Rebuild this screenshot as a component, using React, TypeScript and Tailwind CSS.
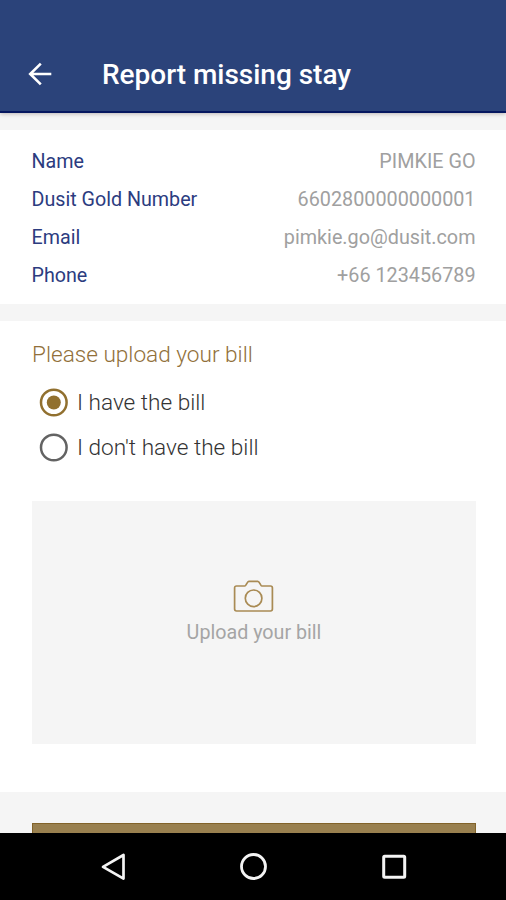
const details = [
  { label: "Name", value: "PIMKIE GO" },
  { label: "Dusit Gold Number", value: "6602800000000001" },
  { label: "Email", value: "pimkie.go@dusit.com" },
  { label: "Phone", value: "+66 123456789" },
];

function Header() {
  return (
    <header className="flex h-[113px] shrink-0 items-end border-b-2 border-[#05175f] bg-[#2b437a] pb-[18px] shadow-[0_1px_4px_rgba(60,40,40,0.3)]">
      <svg className="mb-[7px] ml-[28px] h-6 w-6" viewBox="0 0 24 24" fill="none" stroke="#fff" strokeWidth="2.6">
        <path d="M23.3 12H2.2M12.8 1.6L2.2 12l10.6 10.4" />
      </svg>
      <h1 className="ml-[50px] text-[28px] leading-[36px] font-medium tracking-[-0.02px] text-white">Report missing stay</h1>
    </header>
  );
}

function Details() {
  return (
    <section className="mt-[17px] h-[174px] bg-white pt-[13px] pr-[30.5px] pl-[31.5px]">
      {details.map((item) => (
        <div key={item.label} className="flex h-[38px] items-center justify-between text-[19.7px] leading-[38px]">
          <span className="text-[#2c3c7f]">{item.label}</span>
          <span className="text-[19.8px] text-[#a0a0a0]">{item.value}</span>
        </div>
      ))}
    </section>
  );
}

function Option({ label, checked }: { label: string; checked?: boolean }) {
  return (
    <div className="flex h-[45px] items-center gap-[9px] pl-2">
      <svg className="h-7 w-7 overflow-visible" viewBox="0 0 28 28" fill="none">
        <circle cx="13.8" cy="13.5" r="12.8" stroke={checked ? "#91702f" : "#636363"} strokeWidth="2.5" />
        {checked && <circle cx="13.8" cy="13.5" r="7" fill="#91702f" />}
      </svg>
      <span className="pt-[1px] text-[22.6px] font-light text-[#333]">{label}</span>
    </div>
  );
}

function Upload() {
  return (
    <section className="mt-[17px] h-[471px] bg-white px-8 pt-[19px]">
      <h2 className="text-[22.6px] leading-[30px] font-light text-[#91703a]">Please upload your bill</h2>
      <div className="mt-[10px]">
        <Option label="I have the bill" checked />
        <Option label="I don't have the bill" />
      </div>
      <div className="mt-[31px] flex h-[243px] w-[444px] flex-col items-center bg-[#f5f5f5] pt-[78px]">
        <svg className="h-[34px] w-[42px]" viewBox="0 0 42 34" fill="none" stroke="#a98b54" strokeWidth="1.7">
          <path d="M3.5 7h8.3c1.3 0 2.4-4.7 4-4.7h9c1.8 0 2.7 4.7 4 4.7h8.700c1.200 0 1.900.7 1.900 1.900v21.200c0 1.200-.7 1.900-1.900 1.900h-34c-1.200 0-1.900-.7-1.900-1.900V8.900c0-1.200.7-1.900 1.900-1.900z" />
          <circle cx="20.6" cy="19.3" r="8.3" />
        </svg>
        <p className="mt-[5px] text-[19.7px] leading-[30px] text-[#a5a5a5]">Upload your bill</p>
      </div>
    </section>
  );
}

function NavigationBar() {
  return (
    <nav className="flex h-[67px] items-center bg-black pl-[100px]">
      <svg className="h-7 w-7" viewBox="0 0 28 28" fill="none" stroke="#f4f4f4" strokeWidth="2.7" strokeLinejoin="round">
        <path d="M3 13.8L23.5 2v23.6z" />
      </svg>
      <svg className="ml-[112px] h-7 w-7" viewBox="0 0 28 28" fill="none" stroke="#f4f4f4" strokeWidth="2.8">
        <circle cx="13.5" cy="13.5" r="12" />
      </svg>
      <svg className="ml-[112px] h-7 w-7" viewBox="0 0 28 28" fill="none" stroke="#f4f4f4" strokeWidth="3">
        <rect x="3.7" y="3.2" width="21" height="21" rx="1" />
      </svg>
    </nav>
  );
}

function App() {
  return (
    <main className="flex h-[900px] w-[506px] flex-col overflow-hidden bg-[#f5f5f5] font-['Roboto',sans-serif]">
      <Header />
      <Details />
      <Upload />
      <div className="mx-8 mt-[31px] h-[10px] w-[444px] border-x border-t border-[#82632a] bg-[#99804f]" />
      <NavigationBar />
    </main>
  );
}

export default App;
